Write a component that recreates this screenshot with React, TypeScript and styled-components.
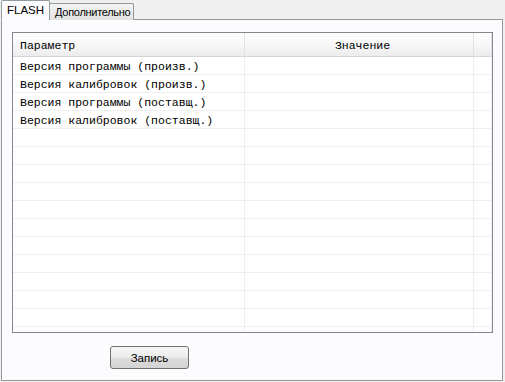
import * as React from 'react'
import styled, { createGlobalStyle } from 'styled-components'

const GlobalStyle = createGlobalStyle`
  html, body {
    margin: 0;
    padding: 0;
    background: #f0f0f0;
  }
`

const Window = styled.div`
  width: 505px;
  height: 382px;
  box-sizing: border-box;
  padding: 0 2px 1px 1px;
  display: flex;
  flex-direction: column;
  background: #f0f0f0;
  font-family: 'Liberation Sans', 'DejaVu Sans', sans-serif;
  font-size: 11px;
  color: #000;
`

const TabStrip = styled.div`
  display: flex;
  align-items: flex-end;
  height: 20px;
  position: relative;
  z-index: 1;
`

const Tab = styled.div<{ $active?: boolean }>`
  box-sizing: border-box;
  height: ${(p) => (p.$active ? '20px' : '17px')};
  padding: ${(p) => (p.$active ? '3px 5px 0 5px' : '2px 3px 0 5px')};
  border: 1px solid #919b9c;
  border-bottom: ${(p) => (p.$active ? '1px solid #fcfcfe' : '0')};
  border-radius: 2px 2px 0 0;
  background: ${(p) => (p.$active ? '#fcfcfe' : 'linear-gradient(#f4f4f4, #e2e2e2)')};
  margin-left: ${(p) => (p.$active ? '0' : '-1px')};
  font-family: 'Liberation Sans', sans-serif;
  font-size: ${(p) => (p.$active ? '11.5px' : '11px')};
  letter-spacing: ${(p) => (p.$active ? '0' : '-0.3px')};
  white-space: nowrap;
`

const Panel = styled.div`
  flex: 1;
  margin-top: -1px;
  border: 1px solid #919b9c;
  background: #fcfcfe;
  display: flex;
  flex-direction: column;
  align-items: flex-start;
  padding: 12px 9px 0 10px;
`

const Grid = styled.div`
  box-sizing: border-box;
  width: 481px;
  height: 301px;
  border: 1px solid #828790;
  background: #fff;
  overflow: hidden;
  font-family: 'Liberation Mono', 'DejaVu Sans Mono', monospace;
  font-size: 11.5px;
`

const Row = styled.div<{ $head?: boolean }>`
  display: grid;
  grid-template-columns: 232px 229px 1fr;
  height: ${(p) => (p.$head ? '24px' : '18px')};
  box-sizing: border-box;
  border-bottom: 1px solid ${(p) => (p.$head ? '#d5d5d5' : '#efefef')};
  background: ${(p) => (p.$head ? 'linear-gradient(#ffffff 0%, #f7f7f7 50%, #ececec 100%)' : '#fff')};
`

const Cell = styled.div<{ $head?: boolean; $center?: boolean }>`
  display: flex;
  align-items: center;
  justify-content: ${(p) => (p.$center ? 'center' : 'flex-start')};
  padding: ${(p) => (p.$head ? '1px 0 0 7px' : '2px 0 0 7px')};
  border-right: 1px solid ${(p) => (p.$head ? '#e2e2e2' : '#eeeeee')};
  white-space: nowrap;
  overflow: hidden;
`

const Footer = styled.div`
  display: flex;
  padding: 13px 0 0 98px;
`

const Button = styled.button`
  width: 79px;
  height: 23px;
  border: 1px solid #707070;
  border-radius: 3px;
  background: linear-gradient(#f6f6f6 0%, #ececec 50%, #dcdcdc 52%, #d4d4d4 100%);
  font-family: 'Liberation Sans', sans-serif;
  font-size: 11.5px;
  color: #000;
  padding: 0;
`

const params = [
  'Версия программы (произв.)',
  'Версия калибровок (произв.)',
  'Версия программы (поставщ.)',
  'Версия калибровок (поставщ.)',
]

const App: React.FC = () => {
  const rows = [...params, ...Array(12).fill('')]
  return (
    <>
      <GlobalStyle />
      <Window>
        <TabStrip>
          <Tab $active>FLASH</Tab>
          <Tab>Дополнительно</Tab>
        </TabStrip>
        <Panel>
          <Grid>
            <Row $head>
              <Cell $head>Параметр</Cell>
              <Cell $head $center>Значение</Cell>
              <Cell $head />
            </Row>
            {rows.map((name, i) => (
              <Row key={i}>
                <Cell>{name}</Cell>
                <Cell />
                <Cell />
              </Row>
            ))}
          </Grid>
          <Footer>
            <Button>Запись</Button>
          </Footer>
        </Panel>
      </Window>
    </>
  )
}

export default App
